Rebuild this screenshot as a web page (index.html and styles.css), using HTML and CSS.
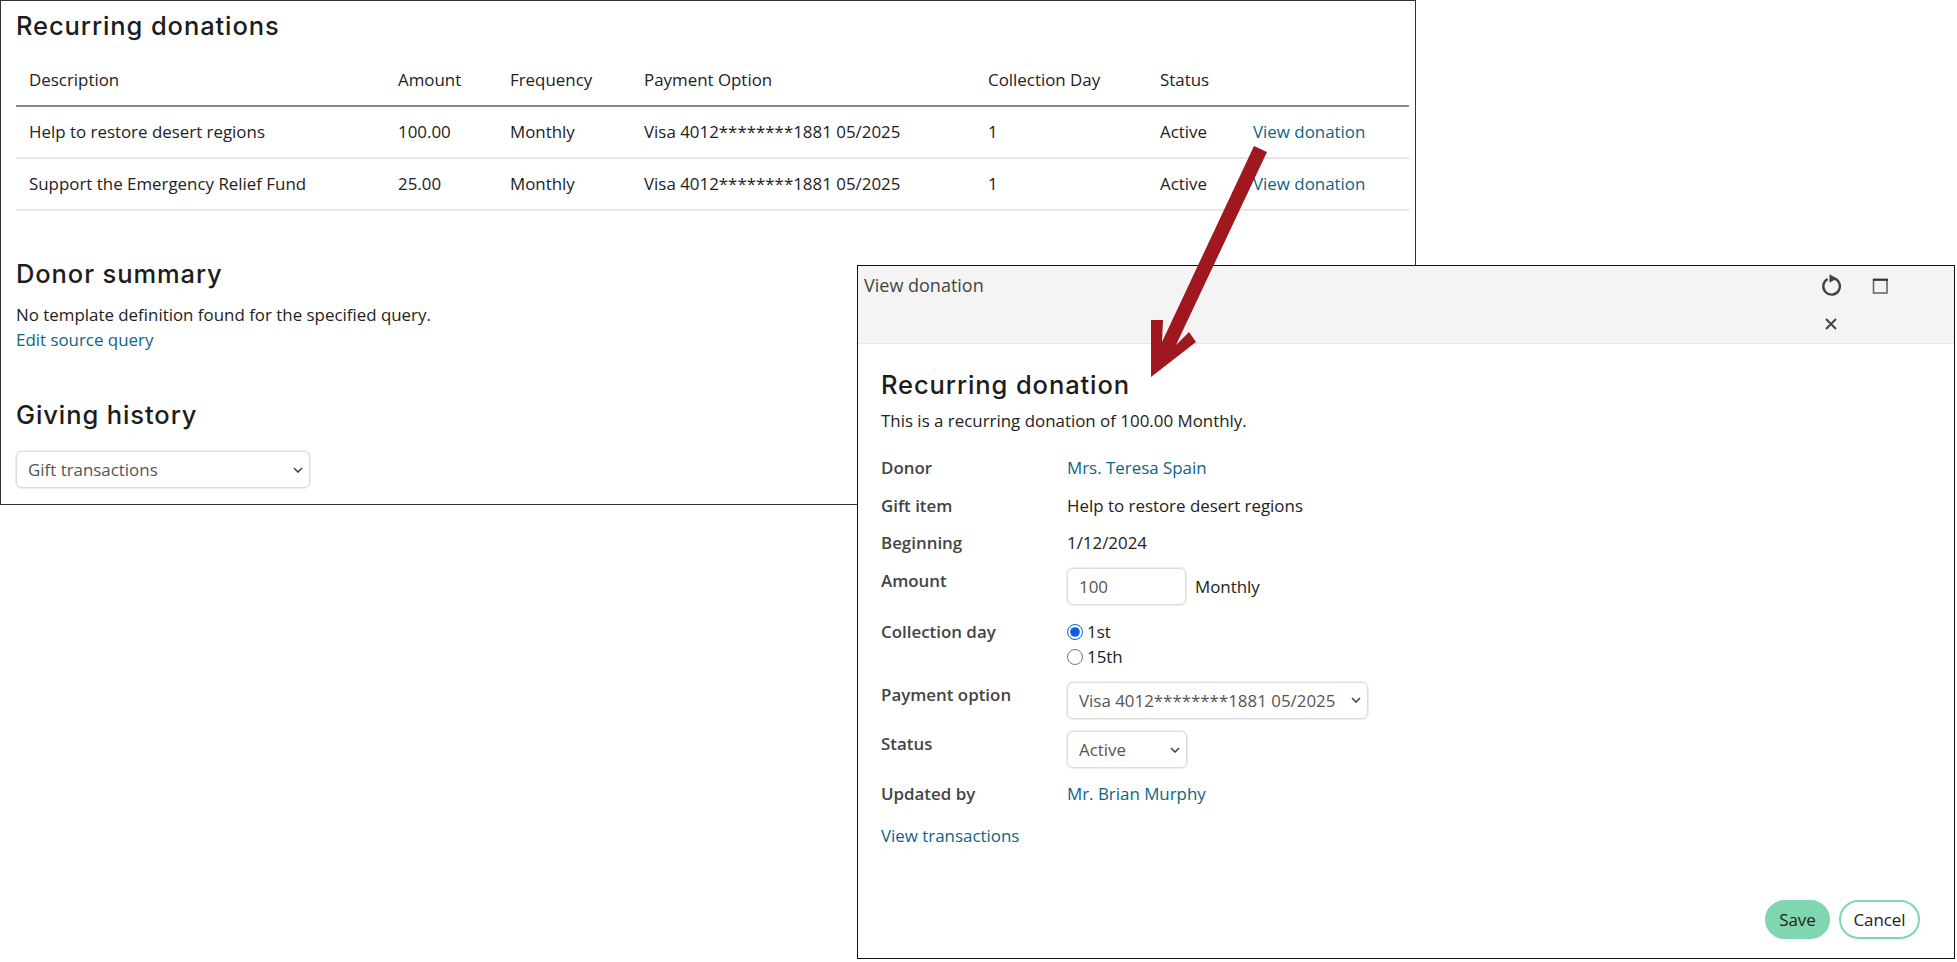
FILE: index.html
```html
<!DOCTYPE html>
<html>

<head>
    <meta charset="utf-8">
    <title>Recurring donations</title>
    <link rel="stylesheet" href="styles.css">
</head>

<body>
    <div class="desktop">

        <div class="window back-window">
            <h2 class="first-title">Recurring donations</h2>
            <table class="donations">
                <colgroup>
                    <col class="col-desc">
                    <col class="col-amount">
                    <col class="col-freq">
                    <col class="col-payment">
                    <col class="col-day">
                    <col class="col-status">
                    <col class="col-link">
                </colgroup>
                <thead>
                    <tr>
                        <th>Description</th>
                        <th>Amount</th>
                        <th>Frequency</th>
                        <th>Payment Option</th>
                        <th>Collection Day</th>
                        <th>Status</th>
                        <th></th>
                    </tr>
                </thead>
                <tbody>
                    <tr>
                        <td>Help to restore desert regions</td>
                        <td>100.00</td>
                        <td>Monthly</td>
                        <td>Visa 4012********1881 05/2025</td>
                        <td>1</td>
                        <td>Active</td>
                        <td><a href="#">View donation</a></td>
                    </tr>
                    <tr>
                        <td>Support the Emergency Relief Fund</td>
                        <td>25.00</td>
                        <td>Monthly</td>
                        <td>Visa 4012********1881 05/2025</td>
                        <td>1</td>
                        <td>Active</td>
                        <td><a href="#">View donation</a></td>
                    </tr>
                </tbody>
            </table>

            <h2 class="summary-title">Donor summary</h2>
            <p class="plain summary-text">No template definition found for the specified query.</p>
            <a href="#" class="block-link">Edit source query</a>

            <h2 class="history-title">Giving history</h2>
            <select class="field history-select">
                <option>Gift transactions</option>
            </select>
        </div>

        <div class="window modal">
            <div class="modal-head">
                <span class="modal-name">View donation</span>
                <div class="modal-tools">
                    <svg class="tool" viewBox="0 0 24 24" width="24" height="24">
                        <path d="M15 4.400A8.300 8.300 0 1 1 8.700 5" fill="none" stroke="#444" stroke-width="2.400" />
                        <path d="M10.500 .3L18 4.500l-7.500 4.200z" fill="#444" />
                    </svg>
                    <svg class="tool" viewBox="0 0 24 24" width="24" height="24">
                        <rect x="5.500" y="5.500" width="13.500" height="13.500" fill="none" stroke="#666" stroke-width="1.600" />
                        <path d="M5 5.800h15" stroke="#333" stroke-width="2" />
                    </svg>
                    <svg class="tool" viewBox="0 0 24 24" width="24" height="24">
                        <path d="M7 7l10 10M17 7L7 17" fill="none" stroke="#444" stroke-width="2" />
                    </svg>
                </div>
            </div>

            <div class="modal-body">
                <h2 class="modal-title">Recurring donation</h2>
                <p class="plain intro">This is a recurring donation of 100.00 Monthly.</p>

                <div class="form-grid">
                    <div class="label">Donor</div>
                    <div><a href="#">Mrs. Teresa Spain</a></div>

                    <div class="label">Gift item</div>
                    <div>Help to restore desert regions</div>

                    <div class="label">Beginning</div>
                    <div>1/12/2024</div>

                    <div class="label">Amount</div>
                    <div class="amount-row">
                        <input class="field amount-input" type="text" value="100">
                        <span>Monthly</span>
                    </div>

                    <div class="label">Collection day</div>
                    <div class="radios">
                        <label><input type="radio" name="day" checked>1st</label>
                        <label><input type="radio" name="day">15th</label>
                    </div>

                    <div class="label">Payment option</div>
                    <div>
                        <select class="field payment-select">
                            <option>Visa 4012********1881 05/2025</option>
                        </select>
                    </div>

                    <div class="label">Status</div>
                    <div>
                        <select class="field status-select">
                            <option>Active</option>
                        </select>
                    </div>

                    <div class="label">Updated by</div>
                    <div><a href="#">Mr. Brian Murphy</a></div>
                </div>

                <a href="#" class="block-link transactions">View transactions</a>
            </div>

            <div class="modal-foot">
                <button class="btn btn-save">Save</button>
                <button class="btn btn-cancel">Cancel</button>
            </div>
        </div>

        <svg class="arrow" viewBox="0 0 1957 962" width="1957" height="962">
            <polygon points="1254,146 1267,152 1176,345 1189,332 1196,342 1151,377 1151,320 1163,320 1162,342" fill="#a0171f" />
        </svg>

    </div>
</body>

</html>
```

FILE: styles.css
```css
html,
body {
    margin: 0;
    padding: 0;
    background: #fff;
    overflow: hidden;
}

body {
    font-family: "Open Sans", "Noto Sans", sans-serif;
    font-size: 16.9px;
    line-height: 25px;
    color: #222;
}

a {
    color: #0b6584;
    text-decoration: none;
}

h2 {
    margin: 0;
    font-family: Inter, "Open Sans", sans-serif;
    font-size: 25.5px;
    line-height: 32px;
    font-weight: 500;
    letter-spacing: 0.9px;
    color: #1d1d1d;
}

.desktop {
    position: relative;
    width: 1957px;
    height: 962px;
}

.window {
    position: absolute;
    box-sizing: border-box;
    background: #fff;
}

.back-window {
    left: 0;
    top: 0;
    width: 1416px;
    height: 505px;
    border: 1px solid #333;
    padding: 9px 6px 0 15px;
}

.donations {
    table-layout: fixed;
    border-collapse: collapse;
    width: 1393px;
    margin-top: 12px;
}

.col-desc {
    width: 368px;
}

.col-amount {
    width: 112px;
}

.col-freq {
    width: 134px;
}

.col-payment {
    width: 344px;
}

.col-day {
    width: 172px;
}

.col-status {
    width: 93px;
}

.col-link {
    width: 170px;
}

.donations th {
    height: 52px;
    padding: 0 14px;
    text-align: left;
    font-weight: 400;
    border-bottom: 2px solid #888;
    box-sizing: border-box;
}

.donations td {
    height: 52px;
    padding: 0 14px 2px;
    border-bottom: 2px solid #e6e6e6;
    box-sizing: border-box;
    white-space: nowrap;
}

.donations th:first-child,
.donations td:first-child {
    padding-left: 13px;
}

.plain {
    margin: 0;
}

.block-link {
    display: block;
}

.summary-title {
    margin-top: 47px;
}

.summary-text {
    margin-top: 12px;
}

.history-title {
    margin-top: 47px;
}

.field {
    box-sizing: border-box;
    height: 37px;
    background-color: #fff;
    border: 1px solid #ddd;
    border-radius: 6px;
    box-shadow: 0 0 0 1px #eee;
    font-family: "Open Sans", "Noto Sans", sans-serif;
    font-size: 16.9px;
    color: #555;
    padding: 0 11px;
    outline: none;
}

select.field {
    appearance: none;
    background-image: url("data:image/svg+xml,%3Csvg xmlns='http://www.w3.org/2000/svg' width='10' height='6'%3E%3Cpath d='M1 1l4 4 4-4' fill='none' stroke='%23444' stroke-width='1.600'/%3E%3C/svg%3E");
    background-repeat: no-repeat;
    background-position: right 6px center;
}

.history-select {
    display: block;
    width: 294px;
    margin-top: 20px;
}

/* dialog */
.modal {
    left: 857px;
    top: 265px;
    width: 1098px;
    height: 694px;
    border: 1px solid #111;
    display: flex;
    flex-direction: column;
}

.modal-head {
    display: flex;
    justify-content: space-between;
    height: 78px;
    box-sizing: border-box;
    background: #f4f4f4;
    border-bottom: 1px solid #e6e6e6;
    padding: 7px 0 0 6px;
    flex: none;
}

.modal-name {
    font-size: 18px;
    color: #444;
}

.modal-tools {
    display: grid;
    grid-template-columns: 24px 24px;
    column-gap: 25px;
    row-gap: 14px;
    grid-auto-rows: 24px;
    width: 73px;
    margin-right: 62px;
    margin-top: 1px;
}

.tool {
    display: block;
}

.modal-body {
    flex: 1;
    padding: 25px 23px 0;
}

.intro {
    margin-top: 7px;
}

.form-grid {
    display: grid;
    grid-template-columns: 186px 1fr;
    row-gap: 12.5px;
    margin-top: 22px;
}

.label {
    font-weight: 600;
    color: #444;
}

.amount-row {
    display: flex;
    align-items: center;
    gap: 9px;
    margin-bottom: 2px;
}

.amount-input {
    width: 119px;
}

.radios label {
    display: flex;
    align-items: center;
    gap: 4px;
    height: 25px;
    font-weight: 500;
}

.radios input {
    margin: 0;
    width: 16px;
    height: 16px;
    accent-color: #0b5fdc;
}

.payment-select {
    display: block;
    width: 301px;
}

.status-select {
    display: block;
    width: 120px;
}

.transactions {
    margin-top: 17px;
}

.modal-foot {
    display: flex;
    justify-content: flex-end;
    gap: 9px;
    padding: 0 34px 19px 0;
}

.btn {
    box-sizing: border-box;
    height: 39px;
    border-radius: 20px;
    border: 2px solid #80d6ae;
    font-family: "Open Sans", "Noto Sans", sans-serif;
    font-size: 16.9px;
    color: #222;
    padding: 0;
}

.btn-save {
    width: 65px;
    background: #80d6ae;
}

.btn-cancel {
    width: 81px;
    background: #fff;
}

.arrow {
    position: absolute;
    left: 0;
    top: 0;
    pointer-events: none;
}
```
